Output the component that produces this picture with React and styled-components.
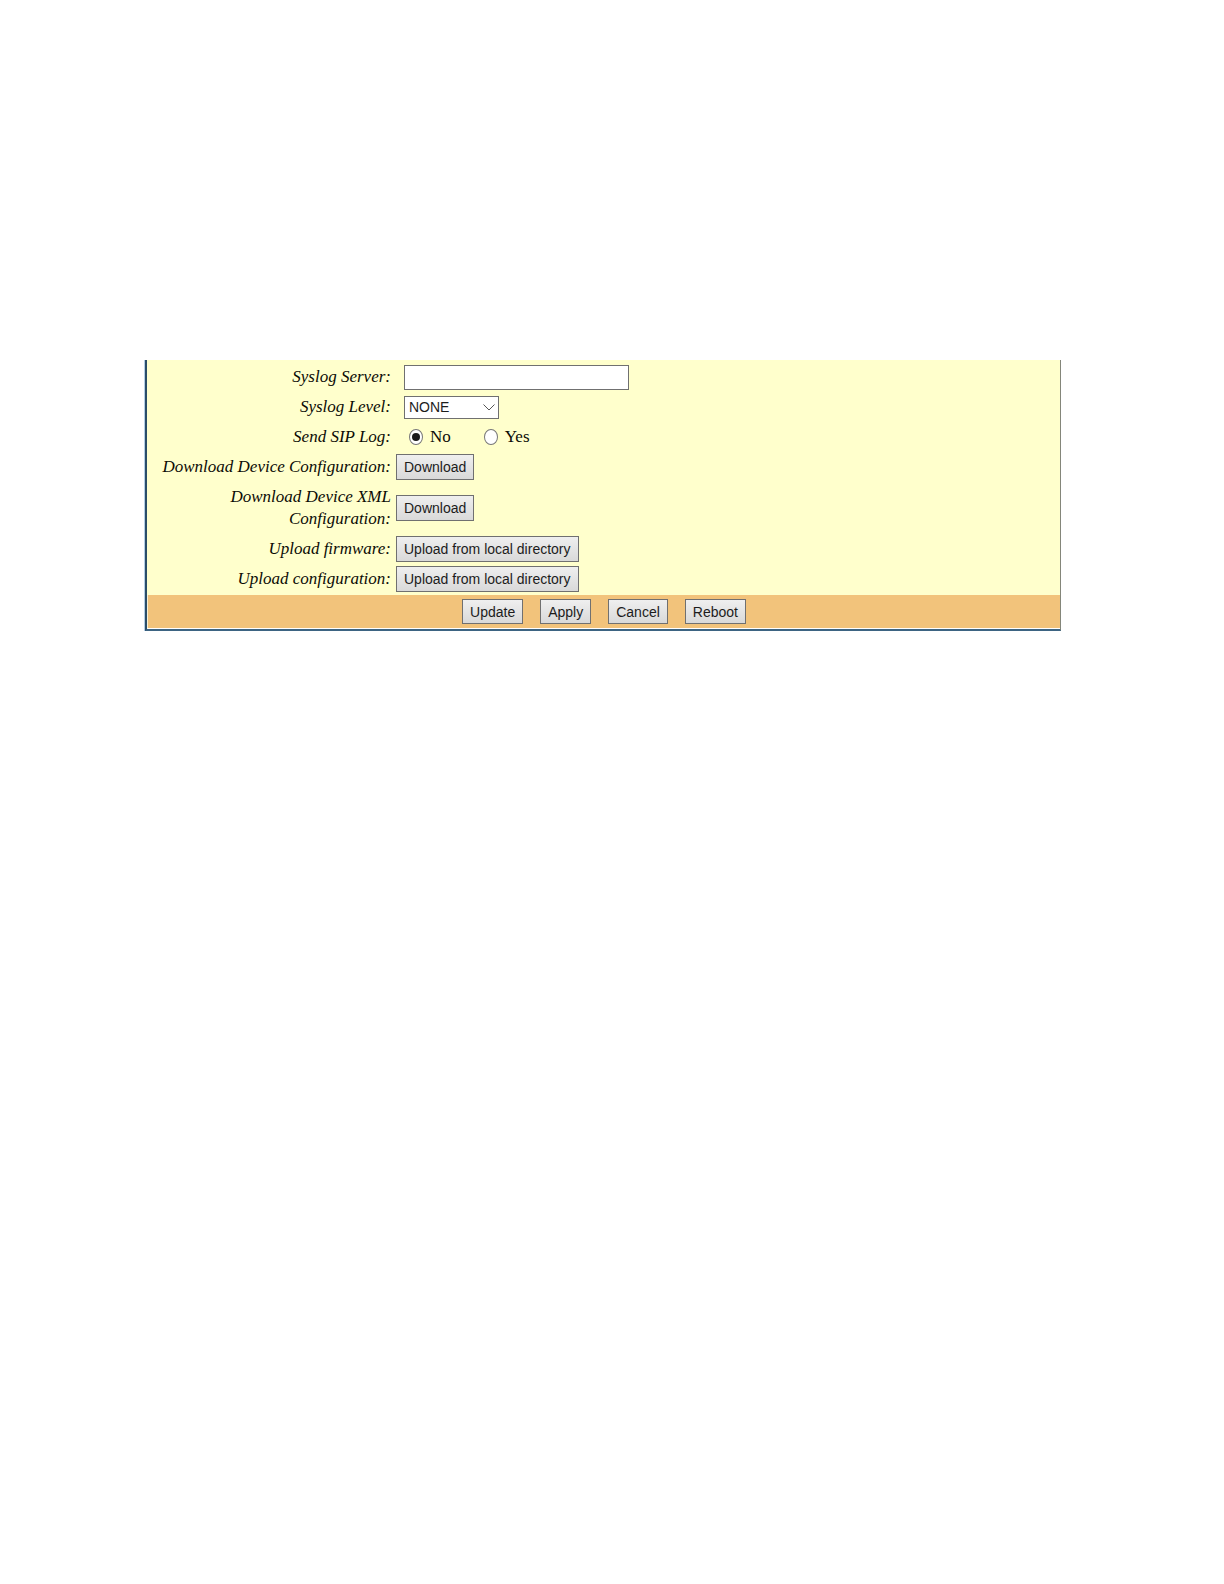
import React from 'react'
import styled, { createGlobalStyle, css } from 'styled-components'

const GlobalStyle = createGlobalStyle`
  body {
    margin: 0;
    background-color: #fff;
    color: #0c0c06;
    font-family: "Liberation Serif", "Times New Roman", serif;
    font-size: 17px;
    line-height: 22px;
  }
`

const actions = [
  { type: 'submit', label: 'Update' },
  { type: 'button', label: 'Apply' },
  { type: 'reset', label: 'Cancel' },
  { type: 'button', label: 'Reboot' },
]

const levels = ['NONE', 'DEBUG', 'INFO', 'WARNING', 'ERROR']

const Field = ({ id, label, inset, children }) => (
  <Row>
    <Label htmlFor={id}>{label}</Label>
    <Control $inset={inset}>{children}</Control>
  </Row>
)

const App = () => (
  <Page>
    <GlobalStyle />
    <Panel onSubmit={e => e.preventDefault()}>
      <Fields>
        <Field id='syslog-server' label='Syslog Server:' inset>
          <TextInput id='syslog-server' type='text' />
        </Field>
        <Field id='syslog-level' label='Syslog Level:' inset>
          <SelectWrap>
            <Select id='syslog-level' defaultValue='NONE'>
              {levels.map(level => <option key={level}>{level}</option>)}
            </Select>
            <svg width='12' height='7' viewBox='0 0 12 7' aria-hidden='true'>
              <path d='M0.5 0.5L6 6L11.5 0.5' fill='none' stroke='#555' />
            </svg>
          </SelectWrap>
        </Field>
        <Row role='radiogroup' aria-labelledby='sip-log'>
          <Label as='span' id='sip-log'>Send SIP Log:</Label>
          <Control $inset>
            <Choices>
              <Choice>
                <Radio name='sip-log' value='no' defaultChecked />
                No
              </Choice>
              <Choice>
                <Radio name='sip-log' value='yes' />
                Yes
              </Choice>
            </Choices>
          </Control>
        </Row>
        <Field id='device-config' label='Download Device Configuration:'>
          <Button id='device-config' type='button'>Download</Button>
        </Field>
        <Field id='device-xml' label='Download Device XML Configuration:'>
          <Button id='device-xml' type='button'>Download</Button>
        </Field>
        <Field id='firmware' label='Upload firmware:'>
          <Button id='firmware' type='button'>Upload from local directory</Button>
        </Field>
        <Field id='configuration' label='Upload configuration:'>
          <Button id='configuration' type='button'>Upload from local directory</Button>
        </Field>
      </Fields>
      <Actions>
        {actions.map(({ type, label }) => (
          <Button key={label} type={type}>{label}</Button>
        ))}
      </Actions>
    </Panel>
  </Page>
)

const Page = styled.main`
  padding: 360px 163px 0 144px;
`

const Panel = styled.form`
  border-left: 2px solid #2b4d68;
  border-right: 1px solid #84867a;
  border-bottom: 2px solid #3d6482;
  margin-left: 1px;
  box-shadow: -1px 0 0 #b4cfe6;
`

const Fields = styled.div`
  display: flex;
  flex-direction: column;
  gap: 4px;
  padding: 4px 0 3px;
  background-color: #ffffcc;
`

const Row = styled.div`
  display: grid;
  grid-template-columns: minmax(0, 244px) 1fr;
  column-gap: 5px;
  align-items: center;
  min-height: 26px;
`

const Label = styled.label`
  padding: 2px 0;
  font-style: italic;
  text-align: right;
`

const Control = styled.div`
  display: flex;
  align-items: center;
  padding-left: ${p => p.$inset ? 8 : 0}px;
`

const controlText = css`
  box-sizing: border-box;
  margin: 0;
  border: 1px solid #707070;
  border-radius: 0;
  color: #1c1c1c;
  font-family: "Liberation Sans", Arial, sans-serif;
  font-size: 14px;
  line-height: 16px;
`

const TextInput = styled.input`
  ${controlText}
  width: 225px;
  height: 25px;
  padding: 0 4px;
  background-color: #fff;
`

const SelectWrap = styled.div`
  position: relative;

  svg {
    position: absolute;
    right: 4px;
    top: 8px;
    pointer-events: none;
  }
`

const Select = styled.select`
  ${controlText}
  display: block;
  appearance: none;
  width: 95px;
  height: 23px;
  padding: 0 16px 0 4px;
  background-color: #fff;
`

const Choices = styled.div`
  display: flex;
  gap: 33px;
  padding-left: 5px;
`

const Choice = styled.label`
  display: flex;
  align-items: center;
  gap: 7px;
`

const Radio = styled.input.attrs({ type: 'radio' })`
  appearance: none;
  box-sizing: border-box;
  display: grid;
  place-items: center;
  width: 14px;
  height: 16px;
  margin: 0;
  border: 1px solid #777;
  border-radius: 50%;
  background-color: #fff;

  &:checked::before {
    content: '';
    width: 8px;
    height: 8px;
    border-radius: 50%;
    background-color: #1a1a1a;
  }
`

const Button = styled.button`
  ${controlText}
  height: 26px;
  padding: 0 7px;
  background-image: linear-gradient(#efefef, #d9d9d9);

  &:hover {
    border-color: #3d6482;
  }
`

const Actions = styled.div`
  display: flex;
  justify-content: center;
  gap: 17px;
  padding: 4px 0 3px;
  border-left: 1px solid #f7efd2;
  border-bottom: 1px solid #fff;
  background-color: #f2c37b;

  ${Button} {
    height: 25px;
    margin-bottom: 1px;
  }
`

export default App
